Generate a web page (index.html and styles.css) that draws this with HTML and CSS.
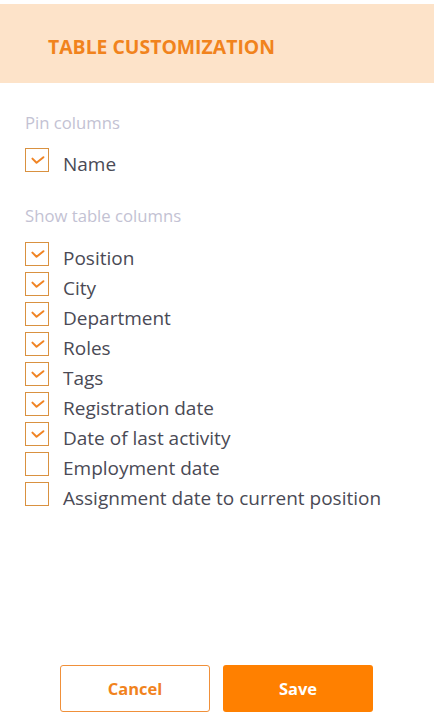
FILE: index.html
```html
<!DOCTYPE html>
<html>
<head>
<meta charset="utf-8">
<link rel="stylesheet" href="styles.css">
</head>
<body>
<div class="panel">
  <header class="head"><h1 class="title">TABLE CUSTOMIZATION</h1></header>
  <main class="body">
    <div class="section-label first">Pin columns</div>
    <div class="list">
      <label class="row"><span class="box on"><svg viewBox="0 0 24 24"><path d="M7 10.5 L11.5 15 L19 9"/></svg></span><span class="txt">Name</span></label>
    </div>
    <div class="section-label">Show table columns</div>
    <div class="list">
      <label class="row"><span class="box on"><svg viewBox="0 0 24 24"><path d="M7 10.5 L11.5 15 L19 9"/></svg></span><span class="txt">Position</span></label>
      <label class="row"><span class="box on"><svg viewBox="0 0 24 24"><path d="M7 10.5 L11.5 15 L19 9"/></svg></span><span class="txt">City</span></label>
      <label class="row"><span class="box on"><svg viewBox="0 0 24 24"><path d="M7 10.5 L11.5 15 L19 9"/></svg></span><span class="txt">Department</span></label>
      <label class="row"><span class="box on"><svg viewBox="0 0 24 24"><path d="M7 10.5 L11.5 15 L19 9"/></svg></span><span class="txt">Roles</span></label>
      <label class="row"><span class="box on"><svg viewBox="0 0 24 24"><path d="M7 10.5 L11.5 15 L19 9"/></svg></span><span class="txt">Tags</span></label>
      <label class="row"><span class="box on"><svg viewBox="0 0 24 24"><path d="M7 10.5 L11.5 15 L19 9"/></svg></span><span class="txt">Registration date</span></label>
      <label class="row"><span class="box on"><svg viewBox="0 0 24 24"><path d="M7 10.5 L11.5 15 L19 9"/></svg></span><span class="txt">Date of last activity</span></label>
      <label class="row"><span class="box"></span><span class="txt">Employment date</span></label>
      <label class="row"><span class="box"></span><span class="txt">Assignment date to current position</span></label>
    </div>
  </main>
  <footer class="foot">
    <button class="btn cancel">Cancel</button>
    <button class="btn save">Save</button>
  </footer>
</div>
</body>
</html>
```
FILE: styles.css
```css
* { box-sizing: border-box; }
html, body { margin: 0; padding: 0; background: #fff; }
body { font-family: "Open Sans", "Noto Sans", sans-serif; }
.panel {
  width: 434px;
  height: 720px;
  padding-top: 4px;
  display: flex;
  flex-direction: column;
}
.head {
  height: 79px;
  background: #fde3c9;
  display: flex;
  align-items: center;
  padding-left: 48px;
  padding-top: 6px;
}
.title {
  margin: 0;
  font-size: 19.4px;
  font-weight: 700;
  color: #f1831d;
  letter-spacing: 0;
}
.body {
  flex: 1;
  padding: 0 25px;
}
.section-label {
  font-size: 16.7px;
  color: #c3c2d3;
  margin-top: 33px;
  margin-bottom: 15px;
  line-height: 22px;
}
.section-label.first { margin-top: 29px; margin-bottom: 14px; }
.list {
  display: flex;
  flex-direction: column;
  gap: 6px;
}
.row {
  display: flex;
  align-items: center;
  gap: 14px;
  height: 24px;
}
.box {
  width: 24px;
  height: 24px;
  border: 1px solid #d99140;
  flex: none;
  display: flex;
  align-items: center;
  justify-content: center;
}
.box svg { width: 24px; height: 24px; }
.box path {
  fill: none;
  stroke: #f08424;
  stroke-width: 2.2;
  stroke-linecap: round;
  stroke-linejoin: round;
}
.txt {
  font-size: 19px;
  color: #4a4a55;
  line-height: 24px;
  white-space: nowrap;
  position: relative;
  top: 4px;
}
.foot {
  display: flex;
  gap: 13px;
  padding-left: 60px;
  padding-bottom: 8px;
}
.btn {
  width: 150px;
  height: 47px;
  border-radius: 3px;
  font-family: inherit;
  font-size: 16.5px;
  font-weight: 700;
  cursor: pointer;
}
.cancel {
  background: #fff;
  border: 1px solid #f0903a;
  color: #f1831d;
}
.save {
  background: #ff8000;
  border: none;
  color: #fff;
}
```
